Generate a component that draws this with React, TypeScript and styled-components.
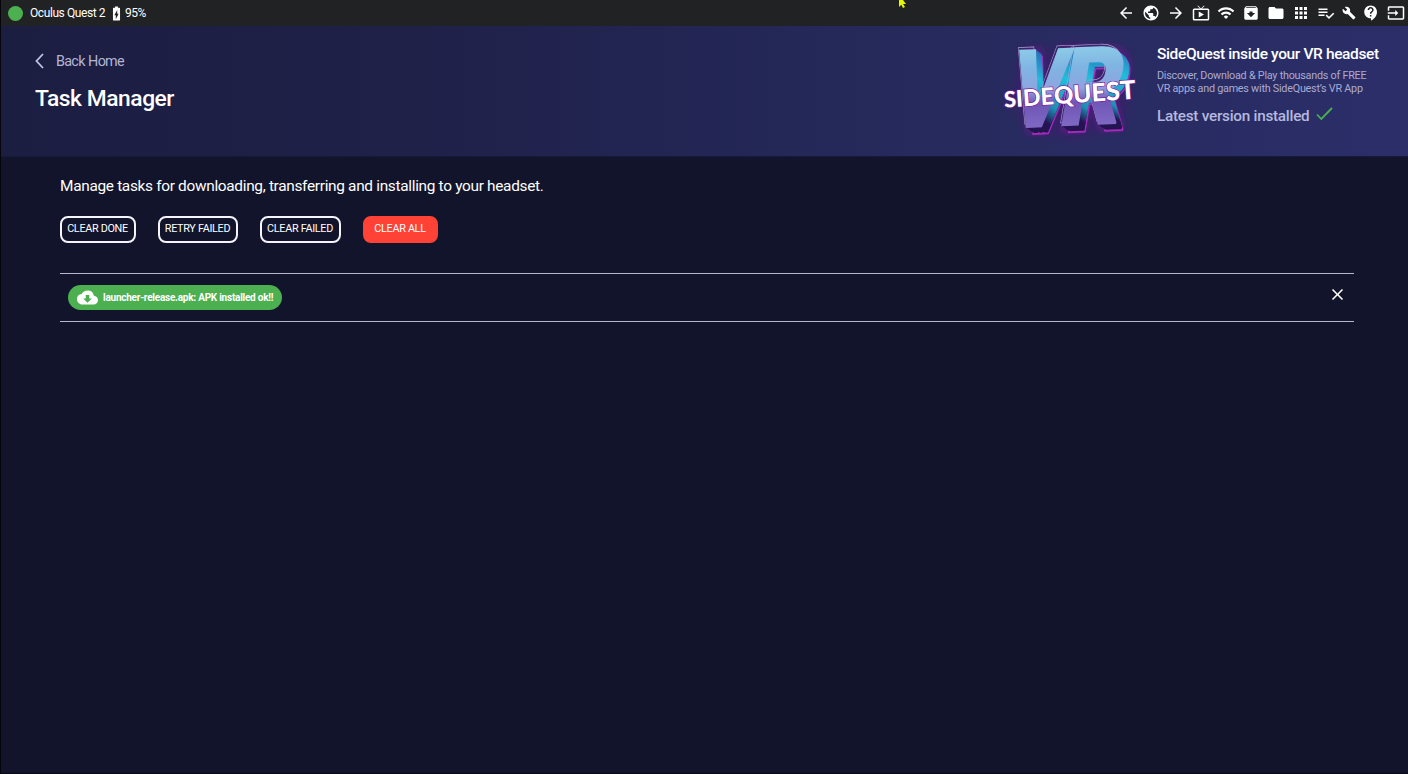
import React from "react";
import styled, { createGlobalStyle } from "styled-components";
import {
  MdArrowBack, MdPublic, MdArrowForward, MdLiveTv, MdWifi, MdArchive, MdFolder, MdApps,
  MdBuild, MdContactSupport, MdInput, MdCloudDownload,
  MdBatteryChargingFull, MdClose,
} from "react-icons/md";

const GlobalStyle = createGlobalStyle`
  * { box-sizing: border-box; }
  body { margin: 0; background: #12142b; font-family: Roboto, "Liberation Sans", sans-serif; color: #fff; overflow: hidden; }
  h1, h2, p { margin: 0; }
  svg { display: block; flex: none; }
`;

const Window = styled.div`
  height: 774px;
  border-left: 1px solid #05060c;
  border-bottom: 1px solid #06070f;
  background: #12142b;
`;

const TitleBar = styled.header`
  height: 26px;
  display: flex;
  align-items: center;
  justify-content: space-between;
  padding-left: 7px;
  background: #202224;
`;

const DeviceStatus = styled.div`
  display: flex;
  align-items: center;
  font-size: 12px;
  line-height: 26px;
`;

const StatusDot = styled.span`
  width: 15px;
  height: 15px;
  margin-right: 7px;
  border-radius: 50%;
  background: #4caf50;
`;

const DeviceName = styled.span`
  width: 78px;
  letter-spacing: -0.42px;
  white-space: nowrap;
`;

const BatteryLevel = styled.span`
  letter-spacing: -0.5px;
`;

const ToolIcons = styled.nav`
  display: flex;
  align-items: center;
`;

const ToolButton = styled.a<{ $width?: number; $size?: number }>`
  width: ${(p) => p.$width ?? 25}px;
  display: flex;
  justify-content: center;
  font-size: ${(p) => p.$size ?? 18}px;
`;

const Banner = styled.section`
  height: 131px;
  display: flex;
  justify-content: space-between;
  background: linear-gradient(90deg, #1b1d41 0%, #1f2149 30%, #262a5c 65%, #2b2e69 100%);
  border-bottom: 1px solid #181a3a;
`;

const Heading = styled.div`
  padding: 25px 0 0 34px;
`;

const BackLink = styled.a`
  display: flex;
  align-items: center;
  height: 20px;
  gap: 12px;
  font-size: 14.4px;
  letter-spacing: -0.72px;
  word-spacing: 0.5px;
  color: #b3b5d6;
`;

const Title = styled.h1`
  margin-top: 14px;
  font-size: 22.8px;
  line-height: 28px;
  font-weight: 500;
  letter-spacing: -0.45px;
`;

const Promo = styled.div`
  display: flex;
  width: 412px;
`;

const PromoText = styled.div`
  padding-top: 17px;
  margin-left: 1px;
  white-space: nowrap;
`;

const PromoTitle = styled.h2`
  font-size: 15.5px;
  line-height: 22px;
  font-weight: 500;
  letter-spacing: -0.37px;
`;

const PromoCopy = styled.p`
  margin-top: 5px;
  font-size: 10.8px;
  line-height: 12.6px;
  letter-spacing: -0.24px;
  color: #a9abd3;
`;

const Version = styled.p`
  display: flex;
  gap: 7px;
  margin-top: 11px;
  font-size: 15.3px;
  line-height: 20px;
  font-weight: 500;
  letter-spacing: -0.26px;
  color: #b5b8df;
`;

const Content = styled.main`
  padding: 19px 54px 0 59px;
`;

const Intro = styled.p`
  font-size: 15.4px;
  line-height: 20px;
  letter-spacing: -0.31px;
`;

const Actions = styled.div`
  display: flex;
  gap: 22px;
  margin-top: 20px;
`;

const ActionButton = styled.button<{ $width: number; $danger?: boolean }>`
  width: ${(p) => p.$width}px;
  height: 27px;
  padding: 0 1px 1px 0;
  border: 2px solid ${(p) => (p.$danger ? "#ff4136" : "#f4f4fa")};
  border-radius: 8px;
  background: ${(p) => (p.$danger ? "#ff4136" : "transparent")};
  color: #fff;
  font-family: inherit;
  font-size: 10.8px;
  line-height: 22px;
  letter-spacing: -0.3px;
  white-space: nowrap;
`;

const TaskRow = styled.div`
  display: flex;
  justify-content: space-between;
  height: 49px;
  margin-top: 30px;
  padding: 11px 7px 0 8px;
  border-top: 1px solid #b6b7cc;
  border-bottom: 1px solid #b6b7cc;
`;

const TaskChip = styled.div`
  display: flex;
  align-items: center;
  gap: 5px;
  width: 214px;
  height: 25px;
  padding-left: 9px;
  border-radius: 13px;
  background: #4caf50;
  font-size: 10px;
  font-weight: 700;
  letter-spacing: -0.24px;
  white-space: nowrap;
`;

const Remove = styled.a`
  font-size: 19px;
`;

const Cursor = styled.svg`
  position: absolute;
  left: 899px;
  top: 0;
`;

const LogoArt = styled.svg`
  overflow: visible;
`;

function QueueIcon() {
  return (
    <svg width="1em" height="1em" viewBox="0 0 24 24" fill="currentColor">
      <path d="M14 10H2v2h12v-2zm0-4H2v2h12V6zM2 16h8v-2H2v2zm19.5-4.5L23 13l-6.99 7-4.51-4.5L13 14l3.01 3 5.49-5.5z" />
    </svg>
  );
}

const tools = [
  { icon: MdArrowBack }, { icon: MdPublic }, { icon: MdArrowForward }, { icon: MdLiveTv },
  { icon: MdWifi }, { icon: MdArchive }, { icon: MdFolder }, { icon: MdApps },
  { icon: QueueIcon }, { icon: MdBuild, width: 21, size: 14 },
  { icon: MdContactSupport, width: 24 }, { icon: MdInput, width: 25 },
];

const depth = [7, 6, 5, 4, 3, 2, 1];
const wordmark = [..."SIDEQUEST"];

function Logo() {
  return (
    <LogoArt width="160" height="130" viewBox="0 0 160 130" role="img" aria-label="SideQuest VR">
      <defs>
        <linearGradient id="face" gradientUnits="userSpaceOnUse" x1="0" y1="-82" x2="0" y2="0">
          <stop offset="0" stopColor="#8fcfe9" />
          <stop offset="0.3" stopColor="#7fb4e2" />
          <stop offset="0.55" stopColor="#8fa4e0" />
          <stop offset="0.72" stopColor="#6f55b5" />
          <stop offset="1" stopColor="#7f68c4" />
        </linearGradient>
        <linearGradient id="side" gradientUnits="userSpaceOnUse" x1="0" y1="-82" x2="0" y2="0">
          <stop offset="0" stopColor="#2a62b4" />
          <stop offset="0.4" stopColor="#22bddb" />
          <stop offset="0.75" stopColor="#1c8fb4" />
          <stop offset="0.93" stopColor="#231452" />
        </linearGradient>
        <radialGradient id="halo">
          <stop offset="0" stopColor="#4b1a80" stopOpacity="0.9" />
          <stop offset="0.65" stopColor="#3b1e6c" stopOpacity="0.55" />
          <stop offset="1" stopColor="#2b2d65" stopOpacity="0" />
        </radialGradient>
        <filter id="soft" x="-20%" y="-20%" width="140%" height="140%">
          <feGaussianBlur stdDeviation="3" />
        </filter>
        <g id="vr" fontFamily="Roboto, sans-serif" fontWeight="900" fontSize="108">
          <text x="0" y="0" textLength="54" lengthAdjust="spacingAndGlyphs">V</text>
          <text x="50" y="0" textLength="61" lengthAdjust="spacingAndGlyphs">R</text>
        </g>
      </defs>
      <ellipse cx="76" cy="66" rx="78" ry="62" fill="url(#halo)" />
      <g transform="translate(11 102) rotate(-2.5) skewX(-12)">
        <use href="#vr" x="4" y="3" fill="#5b1c86" stroke="#5a1c81" strokeWidth="8" filter="url(#soft)" />
        <use href="#vr" x="8" y="7" fill="#221047" stroke="#a32abb" strokeWidth="2" />
        {depth.map((d) => (
          <use key={d} href="#vr" x={d} y={d * 0.7} fill="url(#side)" stroke="url(#side)" strokeWidth="1" />
        ))}
        <use href="#vr" x="-2" y="-3" fill="none" stroke="#a79fce" strokeWidth="0.7" />
        <use href="#vr" fill="url(#face)" stroke="url(#face)" strokeWidth="1.5" />
      </g>
      <g transform="translate(8.5 81.5) rotate(-3.8)" fontFamily="Lato, sans-serif" fontWeight="900">
        <text x="0" y="0" textLength="132" lengthAdjust="spacingAndGlyphs" fill="#fff" stroke="#7a239b" strokeWidth="1.4" paintOrder="stroke">
          {wordmark.map((letter, i) => (
            <tspan key={i} fontSize={22 + i * 0.5}>{letter}</tspan>
          ))}
        </text>
      </g>
    </LogoArt>
  );
}

export default function App() {
  return (
    <Window>
      <GlobalStyle />
      <TitleBar>
        <DeviceStatus>
          <StatusDot />
          <DeviceName>Oculus Quest 2</DeviceName>
          <MdBatteryChargingFull size={17} />
          <BatteryLevel>95%</BatteryLevel>
        </DeviceStatus>
        <ToolIcons>
          {tools.map(({ icon: Icon, width, size }, i) => (
            <ToolButton key={i} $width={width} $size={size}><Icon /></ToolButton>
          ))}
        </ToolIcons>
      </TitleBar>
      <Banner>
        <Heading>
          <BackLink>
            <svg width="9" height="16" viewBox="0 0 9 16" fill="none" stroke="#c3c2e2" strokeWidth="1.8">
              <path d="M8 1 1.5 8 8 15" />
            </svg>
            Back Home
          </BackLink>
          <Title>Task Manager</Title>
        </Heading>
        <Promo>
          <Logo />
          <PromoText>
            <PromoTitle>SideQuest inside your VR headset</PromoTitle>
            <PromoCopy>
              Discover, Download &amp; Play thousands of FREE<br />
              VR apps and games with SideQuest’s VR App
            </PromoCopy>
            <Version>
              Latest version installed
              <svg width="17" height="16" viewBox="0 0 17 16" fill="none" stroke="#4caf50" strokeWidth="1.8">
                <path d="M1 8.5 5.3 13 16 2" />
              </svg>
            </Version>
          </PromoText>
        </Promo>
      </Banner>
      <Content>
        <Intro>Manage tasks for downloading, transferring and installing to your headset.</Intro>
        <Actions>
          <ActionButton $width={76}>CLEAR DONE</ActionButton>
          <ActionButton $width={80}>RETRY FAILED</ActionButton>
          <ActionButton $width={81}>CLEAR FAILED</ActionButton>
          <ActionButton $width={75} $danger>CLEAR ALL</ActionButton>
        </Actions>
        <TaskRow>
          <TaskChip>
            <MdCloudDownload size={21} />
            launcher-release.apk: APK installed ok!!
          </TaskChip>
          <Remove><MdClose /></Remove>
        </TaskRow>
      </Content>
      <Cursor width="8" height="9" viewBox="0 0 8 9">
        <path d="M0 0H4L7 4H4L6 7 4 8 2.3 4.8 0 7Z" fill="#e6f500" />
      </Cursor>
    </Window>
  );
}
